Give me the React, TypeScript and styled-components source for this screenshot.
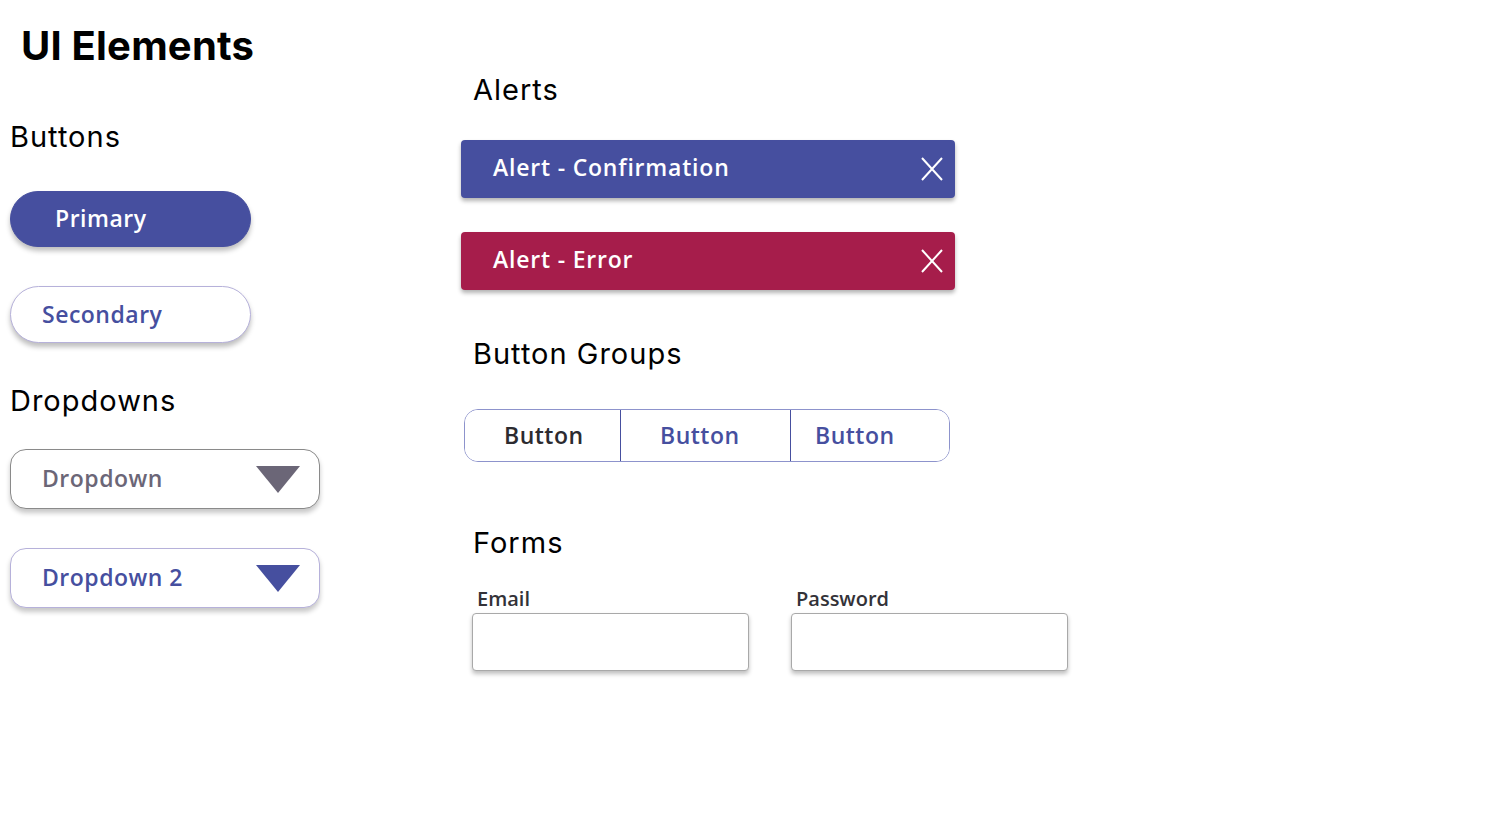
import React from "react";
import styled, { createGlobalStyle } from "styled-components";

const GlobalStyle = createGlobalStyle`
  body {
    margin: 0;
    background: #ffffff;
    font-family: Inter, "Liberation Sans", sans-serif;
  }
`;

const Page = styled.div`
  display: flex;
  width: 1507px;
  height: 832px;
  background: #fff;
`;

const LeftColumn = styled.div`
  display: flex;
  flex-direction: column;
  align-items: flex-start;
  width: 461px;
  flex-shrink: 0;
  padding-left: 10px;
  box-sizing: border-box;
`;

const RightColumn = styled.div`
  display: flex;
  flex-direction: column;
  align-items: flex-start;
  width: 640px;
`;

const Title = styled.h1`
  margin: 24px 0 0 11px;
  font-family: Inter, "Liberation Sans", sans-serif;
  font-size: 40px;
  line-height: 44px;
  font-weight: 700;
  letter-spacing: 0.2px;
  color: #000;
`;

const Heading = styled.h2<{ $mt: number; $ml?: number }>`
  margin: ${p => p.$mt}px 0 0 ${p => p.$ml || 0}px;
  font-family: Inter, "Liberation Sans", sans-serif;
  font-size: 29px;
  line-height: 34px;
  font-weight: 400;
  letter-spacing: 1px;
  color: #000;
`;

const PillButton = styled.button<{ $variant: "primary" | "secondary"; $mt: number }>`
  margin-top: ${p => p.$mt}px;
  width: 241px;
  height: ${p => (p.$variant === "primary" ? 56 : 57)}px;
  border-radius: 29px;
  box-sizing: border-box;
  text-align: left;
  padding: 0 0 2px ${p => (p.$variant === "primary" ? 44 : 31)}px;
  font-family: "Open Sans", sans-serif;
  font-size: 23px;
  font-weight: 600;
  letter-spacing: 0.5px;
  background: ${p => (p.$variant === "primary" ? "#464f9f" : "#ffffff")};
  color: ${p => (p.$variant === "primary" ? "#ffffff" : "#464f9f")};
  border: 1px solid ${p => (p.$variant === "primary" ? "#464f9f" : "#b6b1da")};
  box-shadow: 0 4px 5px rgba(0, 0, 0, 0.25);
`;

const Dropdown = styled.div<{ $active?: boolean; $mt: number }>`
  margin-top: ${p => p.$mt}px;
  display: flex;
  align-items: center;
  justify-content: space-between;
  width: 310px;
  height: 60px;
  box-sizing: border-box;
  padding: 0 19px 0 31px;
  border-radius: 16px;
  background: #fff;
  border: 1px solid ${p => (p.$active ? "#b6b1da" : "#8a8a8a")};
  box-shadow: 0 4px 5px rgba(0, 0, 0, 0.22);
  font-family: "Open Sans", sans-serif;
  font-size: 23px;
  font-weight: 600;
  letter-spacing: 0.5px;
  color: ${p => (p.$active ? "#464f9f" : "#6b6677")};
`;

const DropdownLabel = styled.span`
  padding-bottom: 3px;
`;

const Alert = styled.div<{ $kind: "confirm" | "error"; $mt: number }>`
  margin-top: ${p => p.$mt}px;
  display: flex;
  align-items: center;
  justify-content: space-between;
  width: 494px;
  height: 58px;
  box-sizing: border-box;
  padding: 0 12px 0 32px;
  border-radius: 4px;
  background: ${p => (p.$kind === "confirm" ? "#464f9f" : "#a61d4b")};
  box-shadow: 0 3px 4px rgba(0, 0, 0, 0.3);
  font-family: "Open Sans", sans-serif;
  font-size: 23px;
  font-weight: 600;
  letter-spacing: 0.8px;
  color: #fff;
`;

const AlertText = styled.span`
  padding-bottom: 4px;
`;

const Group = styled.div`
  margin: 38px 0 0 3px;
  display: flex;
  width: 486px;
  height: 53px;
  box-sizing: border-box;
  border: 1px solid #8d93cc;
  border-radius: 14px;
  overflow: hidden;
`;

const GroupButton = styled.button<{
  $width: number;
  $pad: number;
  $dark?: boolean;
  $divider?: boolean;
}>`
  width: ${p => p.$width}px;
  flex-shrink: 0;
  height: 100%;
  border: none;
  border-left: ${p => (p.$divider ? "1px solid #464f9f" : "none")};
  background: #fff;
  text-align: left;
  padding: 0 0 2px ${p => p.$pad}px;
  font-family: "Open Sans", sans-serif;
  font-size: 23px;
  font-weight: 600;
  letter-spacing: 0.5px;
  color: ${p => (p.$dark ? "#2c2b30" : "#464f9f")};
`;

const FormRow = styled.div`
  margin: 28px 0 0 11px;
  display: flex;
  gap: 42px;
`;

const Field = styled.div`
  display: flex;
  flex-direction: column;
`;

const Label = styled.label`
  margin-left: 5px;
  font-family: "Open Sans", sans-serif;
  font-size: 20px;
  line-height: 22px;
  font-weight: 600;
  color: #333238;
`;

const Input = styled.input`
  margin-top: 3px;
  width: 277px;
  height: 58px;
  box-sizing: border-box;
  border: 1px solid #a9a9a9;
  border-radius: 4px;
  background: #fff;
  box-shadow: 0 3px 4px rgba(0, 0, 0, 0.25);
`;

const Triangle = ({ color }: { color: string }) => (
  <svg width="44" height="27" viewBox="0 0 44 27">
    <polygon points="0,0 44,0 22,27" fill={color} />
  </svg>
);

const CloseIcon = () => (
  <svg width="22" height="24" viewBox="0 0 22 24">
    <path d="M1 1 L21 23 M21 1 L1 23" stroke="#fff" strokeWidth="2" fill="none" />
  </svg>
);

const App = () => {
  return (
    <>
      <GlobalStyle />
      <Page>
        <LeftColumn>
          <Title>UI Elements</Title>
          <Heading $mt={52}>Buttons</Heading>
          <PillButton $variant="primary" $mt={37}>Primary</PillButton>
          <PillButton $variant="secondary" $mt={39}>Secondary</PillButton>
          <Heading $mt={41}>Dropdowns</Heading>
          <Dropdown $mt={31}>
            <DropdownLabel>Dropdown</DropdownLabel>
            <Triangle color="#6b6677" />
          </Dropdown>
          <Dropdown $mt={39} $active>
            <DropdownLabel>Dropdown 2</DropdownLabel>
            <Triangle color="#464f9f" />
          </Dropdown>
        </LeftColumn>

        <RightColumn>
          <Heading $mt={73} $ml={12}>Alerts</Heading>
          <Alert $kind="confirm" $mt={33}>
            <AlertText>Alert - Confirmation</AlertText>
            <CloseIcon />
          </Alert>
          <Alert $kind="error" $mt={34}>
            <AlertText>Alert - Error</AlertText>
            <CloseIcon />
          </Alert>
          <Heading $mt={47} $ml={12}>Button Groups</Heading>
          <Group>
            <GroupButton $width={155} $pad={39} $dark>Button</GroupButton>
            <GroupButton $width={170} $pad={39} $divider>Button</GroupButton>
            <GroupButton $width={159} $pad={24} $divider>Button</GroupButton>
          </Group>
          <Heading $mt={64} $ml={12}>Forms</Heading>
          <FormRow>
            <Field>
              <Label>Email</Label>
              <Input />
            </Field>
            <Field>
              <Label>Password</Label>
              <Input type="password" />
            </Field>
          </FormRow>
        </RightColumn>
      </Page>
    </>
  );
};

export default App;
